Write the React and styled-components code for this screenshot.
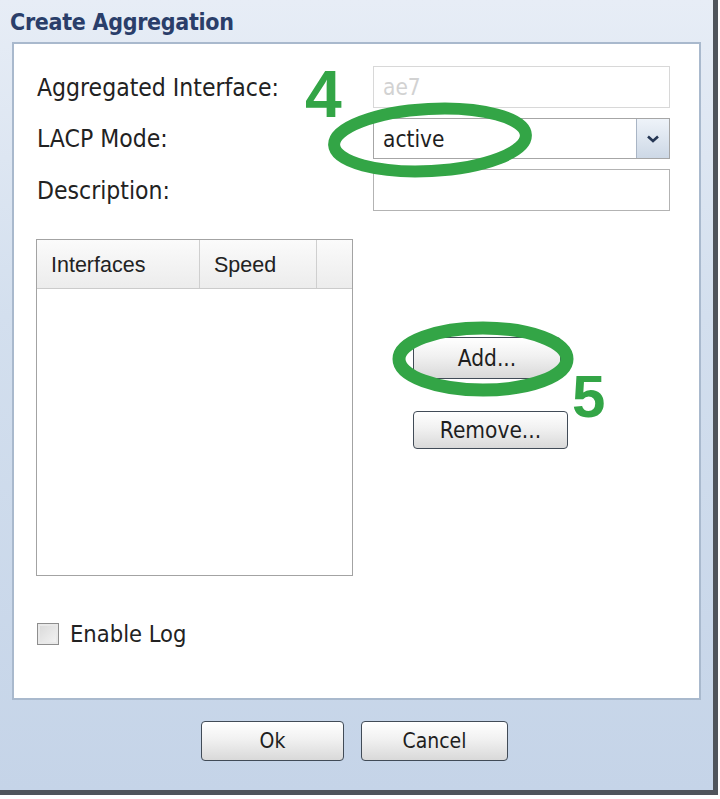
import React from 'react';
import styled, { createGlobalStyle } from 'styled-components';

const GlobalStyle = createGlobalStyle`
  html, body {
    margin: 0;
    padding: 0;
    background: #ffffff;
  }
  body {
    font-family: "DejaVu Sans Condensed", "DejaVu Sans", sans-serif;
    font-stretch: condensed;
    color: #1e1e1e;
  }
`;

const Dialog = styled.div`
  position: relative;
  box-sizing: border-box;
  width: 718px;
  height: 795px;
  display: flex;
  flex-direction: column;
  padding: 0 12px 0 12px;
  background: linear-gradient(180deg, #e7edf6 0%, #d3dfee 40%, #c5d4e8 100%);
  border-right: 5px solid #4f545b;
  border-bottom: 5px solid #4f545b;
`;

const TitleBar = styled.div`
  height: 42px;
  display: flex;
  align-items: center;
  margin-left: -2px;
  padding-top: 2px;
  box-sizing: border-box;
  font-weight: bold;
  font-size: 23px;
  letter-spacing: -0.3px;
  color: #2a3e6a;
`;

const Panel = styled.div`
  box-sizing: border-box;
  height: 658px;
  background: #fff;
  border: 2px solid #a9b9cd;
  padding: 22px 28px 0 23px;
  display: flex;
  flex-direction: column;
`;

const FormGrid = styled.div`
  display: grid;
  grid-template-columns: 336px 297px;
  row-gap: 10px;
`;

const Label = styled.label`
  display: flex;
  align-items: center;
  font-size: 24.5px;
  color: #222;
`;

const TextInput = styled.div`
  box-sizing: border-box;
  height: 42px;
  display: flex;
  align-items: center;
  padding: 0 9px;
  font-size: 22.5px;
  background: #fff;
  border: 1px solid ${(p) => (p.$disabled ? '#d8d8d8' : '#b3b3b3')};
  color: ${(p) => (p.$disabled ? '#d2d2d2' : '#222')};
`;

const Select = styled.div`
  box-sizing: border-box;
  height: 41px;
  display: flex;
  border: 1px solid #a6a6a6;
  background: #fff;
`;

const SelectValue = styled.div`
  flex: 1;
  display: flex;
  align-items: center;
  padding-left: 9px;
  font-size: 22.5px;
  color: #1e1e1e;
`;

const SelectArrow = styled.div`
  width: 32px;
  display: flex;
  align-items: center;
  justify-content: center;
  border-left: 1px solid #a9b5c5;
  background: linear-gradient(180deg, #eef3f9 0%, #cdd8e6 100%);
`;

const ListArea = styled.div`
  display: flex;
  margin-top: 28px;
`;

const Table = styled.div`
  box-sizing: border-box;
  width: 317px;
  height: 337px;
  margin-left: -1px;
  border: 1px solid #a3a3a3;
  display: flex;
  flex-direction: column;
`;

const TableHead = styled.div`
  display: flex;
  height: 48px;
  background: linear-gradient(180deg, #fbfbfb 0%, #ececec 100%);
  border-bottom: 1px solid #cbcbcb;
`;

const HeadCell = styled.div`
  box-sizing: border-box;
  width: ${(p) => p.$w}px;
  flex: ${(p) => (p.$w ? 'none' : 1)};
  display: flex;
  align-items: center;
  padding-left: 14px;
  padding-top: 3px;
  font-family: "Liberation Sans", Arial, sans-serif;
  font-stretch: normal;
  font-size: 21.5px;
  color: #222;
  border-right: ${(p) => (p.$last ? 'none' : '1px solid #cfcfcf')};
`;

const ButtonColumn = styled.div`
  display: flex;
  flex-direction: column;
  align-items: flex-start;
  gap: 32px;
  margin-left: 60px;
  padding-top: 98px;
`;

const Button = styled.button`
  box-sizing: border-box;
  width: ${(p) => p.$w}px;
  height: ${(p) => p.$h || 40}px;
  border: 1px solid #414b57;
  border-radius: 4px;
  background: linear-gradient(180deg, #ffffff 0%, #f1f1f1 45%, #d9d9d9 100%);
  font-family: inherit;
  font-stretch: condensed;
  font-size: ${(p) => p.$fs || 22.5}px;
  color: #1e1e1e;
  padding: 0;
  cursor: pointer;
`;

const CheckRow = styled.label`
  display: flex;
  align-items: center;
  gap: 11px;
  margin-top: 44px;
  font-size: 23.5px;
  color: #222;
`;

const CheckBox = styled.span`
  box-sizing: border-box;
  width: 22px;
  height: 22px;
  border: 1px solid #8e8e8e;
  background: linear-gradient(135deg, #d8d8d8 0%, #f4f4f4 100%);
  box-shadow: inset 0 0 0 2px #e9e9e9;
`;

const Footer = styled.div`
  flex: 1;
  display: flex;
  justify-content: center;
  align-items: flex-start;
  gap: 17px;
  padding-top: 21px;
  padding-right: 4px;
`;

const StepNumber = styled.div`
  position: absolute;
  left: ${(p) => p.$x}px;
  top: ${(p) => p.$y}px;
  font-family: "Liberation Sans", Arial, sans-serif;
  font-stretch: normal;
  font-weight: bold;
  font-size: ${(p) => p.$size}px;
  line-height: 1;
  color: #33a546;
  pointer-events: none;
`;

const Marks = styled.svg`
  position: absolute;
  left: 0;
  top: 0;
  pointer-events: none;
`;

const Chevron = () => (
  <svg width="14" height="10" viewBox="0 0 14 10">
    <path d="M2 2.5 L7 7 L12 2.5" fill="none" stroke="#253654" strokeWidth="2.6" />
  </svg>
);

const App = () => (
  <>
    <GlobalStyle />
    <Dialog>
      <TitleBar>Create Aggregation</TitleBar>
      <Panel>
        <FormGrid>
          <Label>Aggregated Interface:</Label>
          <TextInput $disabled>ae7</TextInput>
          <Label>LACP Mode:</Label>
          <Select>
            <SelectValue>active</SelectValue>
            <SelectArrow>
              <Chevron />
            </SelectArrow>
          </Select>
          <Label>Description:</Label>
          <TextInput />
        </FormGrid>

        <ListArea>
          <Table>
            <TableHead>
              <HeadCell $w={163}>Interfaces</HeadCell>
              <HeadCell $w={117}>Speed</HeadCell>
              <HeadCell $last />
            </TableHead>
          </Table>
          <ButtonColumn>
            <Button $w={148} $h={42}>Add...</Button>
            <Button $w={155} $h={38}>Remove...</Button>
          </ButtonColumn>
        </ListArea>

        <CheckRow>
          <CheckBox />
          Enable Log
        </CheckRow>
      </Panel>
      <Footer>
        <Button $w={143} $fs={21}>Ok</Button>
        <Button $w={147} $fs={21}>Cancel</Button>
      </Footer>

      <Marks width="718" height="795">
        <ellipse cx="430" cy="140" rx="96" ry="31" fill="none" stroke="#33a546" strokeWidth="12" transform="rotate(-3 430 140)" />
        <ellipse cx="483" cy="359" rx="84" ry="31" fill="none" stroke="#33a546" strokeWidth="13" />
      </Marks>
      <StepNumber $x={305} $y={61} $size={66}>4</StepNumber>
      <StepNumber $x={572} $y={367} $size={60}>5</StepNumber>
    </Dialog>
  </>
);

export default App;
